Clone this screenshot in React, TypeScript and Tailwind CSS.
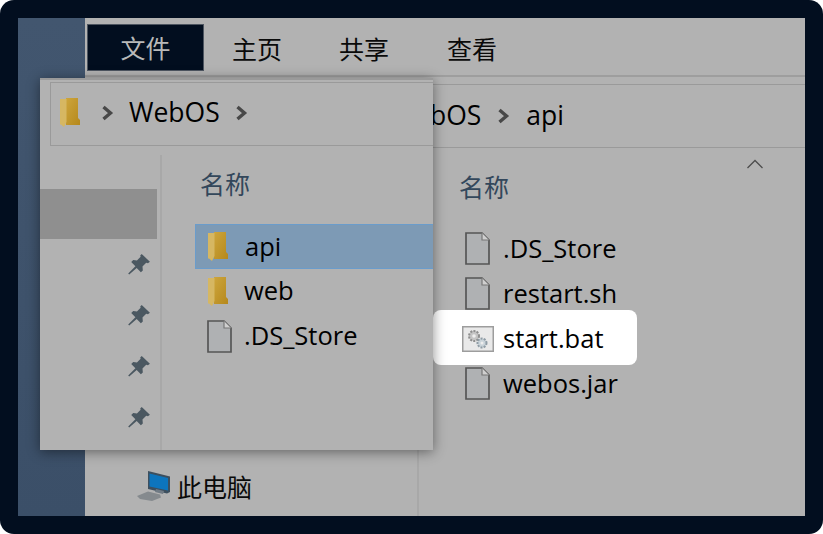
const latin = "font-['Open_Sans','Noto_Sans_CJK_SC',sans-serif]";
const cjk = "font-['Noto_Sans_CJK_SC',sans-serif]";

const Folder = ({ className = '' }: { className?: string }) => (
  <svg viewBox="0 0 20 29" className={className}>
    <defs>
      <linearGradient id="fold" x1="0" y1="0" x2="1" y2="1">
        <stop offset="0" stopColor="#cda53c" />
        <stop offset="1" stopColor="#b5881c" />
      </linearGradient>
    </defs>
    <path d="M6 0h12v20l2 2v5H6z" fill="url(#fold)" />
    <path d="M0 1h6.500v23L4 29 1 26.500H0z" fill="#d6b762" />
  </svg>
);

const FileIcon = () => (
  <svg viewBox="0 0 25 33" className="w-[25px] h-[33px]">
    <path d="M1 1h16l7 7v24H1z" fill="#afb1b3" stroke="#565656" strokeWidth="1.700" />
    <path d="M17 1v7h7" fill="#cfcfcf" stroke="#777" strokeWidth="1.200" />
  </svg>
);

const Pin = () => (
  <svg viewBox="0 0 22 22" className="w-[24px] h-[24px]">
    <path d="M13.500 1l7.500 7-1.800 1.500-1.600-.5-3.400 3.400.3 3.600-1.800 1.700-3.800-3.900L2 19.800l-.9-.9 6.600-6.800-3.800-3.800L5.700 6.500l3.400.4 3.400-3.400-.4-1.300z" fill="#4b5861" />
  </svg>
);

const Chevron = () => (
  <svg viewBox="0 0 13 16" className="w-[13px] h-[16px] shrink-0">
    <path d="M2.500 2l7 6-7 6" fill="none" stroke="#484848" strokeWidth="3.400" />
  </svg>
);

const BatIcon = () => (
  <svg viewBox="0 0 32 26" className="w-[32px] h-[26px]">
    <rect x="0.750" y="0.750" width="30.500" height="24.500" fill="#e9e9e9" stroke="#9d9d9d" strokeWidth="1.500" />
    <circle cx="12" cy="10" r="5" fill="#c4c4c4" stroke="#8e8e8e" strokeWidth="2" strokeDasharray="2 1.200" />
    <circle cx="12" cy="10" r="1.800" fill="#eee" />
    <circle cx="20" cy="17" r="4.500" fill="#c9d3d9" stroke="#8f9ca5" strokeWidth="2" strokeDasharray="2 1.200" />
    <circle cx="20" cy="17" r="1.500" fill="#eee" />
  </svg>
);

const Computer = () => (
  <svg viewBox="0 0 34 30" className="w-[34px] h-[30px]">
    <path d="M11 0l22 5.500v15.500l-3 1.500-19-4.500z" fill="#3d4f5e" />
    <path d="M12.500 2.500l18.500 4.500v12.500l-18.500-4z" fill="#0d75bd" />
    <path d="M19 18l8 2-1 3-8-2z" fill="#6f7a84" />
    <path d="M0 25l11-4.500 12 3 1 3-9 3.500-12-2z" fill="#858a8e" />
  </svg>
);

const FileRow = ({ name, icon, active }: { name: string; icon?: React.ReactNode; active?: boolean }) => (
  <div className={`flex items-center ${active ? 'bg-white rounded-[8px] h-[55px] -mt-[6px] -mb-[4px] pt-[2px] -ml-[32px] pl-[29px] w-[204px] relative' : 'h-[45px]'}`}>
    <div className={`${active ? 'w-[41px]' : 'w-[38px]'} flex shrink-0`}>{icon ?? <FileIcon />}</div>
    <span className={`${latin} text-[25.500px] leading-none text-black whitespace-nowrap`}>{name}</span>
  </div>
);

export default function App() {
  return (
    <div className="w-[823px] h-[534px] bg-white overflow-hidden">
      <div className="w-full h-full bg-[#020e1f] rounded-[14px] p-[18px]">
        <div className="flex w-full h-full">
          <div className="w-[67px] shrink-0 bg-gradient-to-b from-[#42566f] to-[#3b4f68]" />
          <div className="flex-1 relative bg-[#b2b2b2] flex flex-col min-w-0">
            {/* ribbon */}
            <div className={`${cjk} flex h-[59px] items-start border-b-2 border-[#9e9e9e] text-[25px] text-[#0a0a0a]`}>
              <div className="ml-[2px] mt-[6px] w-[117px] h-[47px] bg-[#020e1f] border border-[#4d5560] text-[#b9b9b9] flex items-center justify-center">文件</div>
              <div className="ml-[28px] mt-[9px] w-[50px] leading-[42px]">主页</div>
              <div className="ml-[57px] mt-[9px] w-[50px] leading-[42px]">共享</div>
              <div className="ml-[58px] mt-[9px] w-[50px] leading-[42px]">查看</div>
            </div>
            {/* address bar */}
            <div className={`${latin} mt-[7px] h-[64px] border-y border-[#9a9a9a] flex items-center gap-[16px] pl-[345px] text-[26.500px] text-black`}>
              <span>bOS</span>
              <Chevron />
              <span>api</span>
            </div>
            {/* body */}
            <div className="flex-1 flex min-h-0">
              <div className="w-[334px] shrink-0 border-r-2 border-[#a8a8a8] flex items-end pb-[15px] pl-[52px] gap-[6px]">
                <Computer />
                <span className={`${cjk} text-[25px] leading-[30px] text-[#0a0a0a]`}>此电脑</span>
              </div>
              <div className="flex-1 pl-[40px] relative">
                <svg viewBox="0 0 18 10" className="absolute left-[327px] top-[11px] w-[18px] h-[10px]">
                  <path d="M1.500 9L9 1.500 16.500 9" fill="none" stroke="#4d4d4d" strokeWidth="1.300" />
                </svg>
                <div className={`${cjk} mt-[20px] text-[25px] leading-[36px] text-[#33475b]`}>名称</div>
                <div className="mt-[22px] ml-[6px] flex flex-col">
                  <FileRow name=".DS_Store" />
                  <FileRow name="restart.sh" />
                  <FileRow name="start.bat" active icon={<BatIcon />} />
                  <FileRow name="webos.jar" />
                </div>
              </div>
            </div>
            {/* popup window */}
            <div className="absolute left-[-45px] top-[60px] w-[393px] h-[372px] bg-[#b2b2b2] border-t-2 border-[#9a9a9a] shadow-[0_2px_12px_rgba(0,0,0,0.45)] flex flex-col">
              <div className={`${latin} ml-[10px] mt-[2px] h-[64px] border border-r-0 border-[#9a9a9a] flex items-center pl-[9px] pb-[3px] text-[26.500px] text-black`}>
                <Folder className="w-[20px] h-[29px]" />
                <span className="ml-[21px]"><Chevron /></span>
                <span className="ml-[15px]">WebOS</span>
                <span className="ml-[15px]"><Chevron /></span>
              </div>
              <div className="flex-1 flex mt-[9px] min-h-0">
                <div className="w-[122px] shrink-0 border-r-2 border-[#a8a8a8] flex flex-col">
                  <div className="mt-[34px] w-[117px] h-[50px] bg-[#8f8f8f]" />
                  <div className="mt-[14px] flex flex-col gap-[27px] items-end pr-[9px]">
                    <Pin />
                    <Pin />
                    <Pin />
                    <Pin />
                  </div>
                </div>
                <div className="flex-1 flex flex-col">
                  <div className={`${cjk} ml-[38px] mt-[10px] text-[25px] leading-[36px] text-[#33475b]`}>名称</div>
                  <div className="mt-[23px] ml-[33px] h-[45px] bg-[#7d9ab5] border border-r-0 border-[#6a9ccb] flex items-center pl-[12px] gap-[17px]">
                    <Folder className="w-[20px] h-[29px]" />
                    <span className={`${latin} text-[25.500px] leading-none text-black`}>api</span>
                  </div>
                  <div className="ml-[46px] h-[45px] pb-[1px] flex items-center gap-[16px]">
                    <Folder className="w-[20px] h-[29px]" />
                    <span className={`${latin} text-[25.500px] leading-none text-black`}>web</span>
                  </div>
                  <div className="ml-[45px] h-[45px] pb-[1px] flex items-center gap-[12px]">
                    <FileIcon />
                    <span className={`${latin} text-[25.500px] leading-none text-black`}>.DS_Store</span>
                  </div>
                </div>
              </div>
            </div>
          </div>
        </div>
      </div>
    </div>
  );
}
